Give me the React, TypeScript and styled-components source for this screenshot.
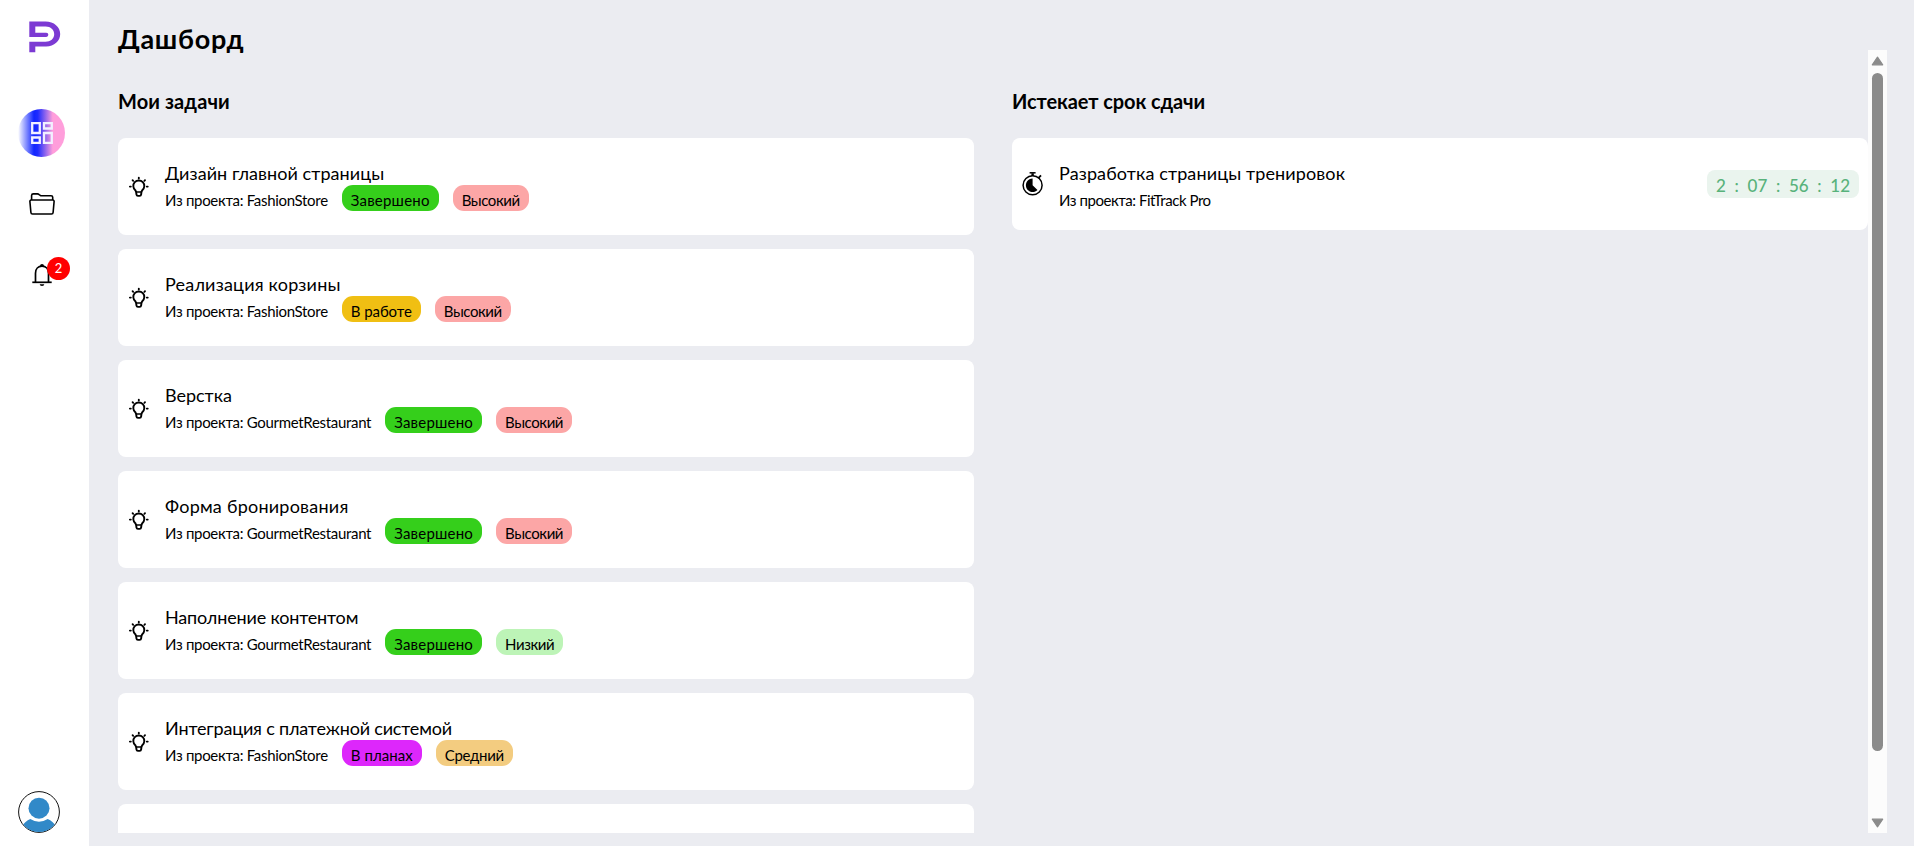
import React from 'react';
import styled, { createGlobalStyle } from 'styled-components';

const GlobalStyle = createGlobalStyle`
  *, *::before, *::after { box-sizing: border-box; }
  body {
    margin: 0;
    background: #ebecf1;
    color: #000;
    font-family: Lato, "Noto Sans", sans-serif;
  }
  h1, h2, h3, p { margin: 0; }
`;

const Page = styled.div`
  display: flex;
  height: 846px;
  overflow: hidden;
`;

const Sidebar = styled.aside`
  display: flex;
  flex-direction: column;
  flex: none;
  width: 89px;
  padding: 21px 0 13px 18px;
  background: #fff;
`;

const LogoMark = styled.svg`
  display: block;
  width: 32px;
  height: 32px;
  margin-left: 11px;
`;

const Nav = styled.nav`
  display: flex;
  flex-direction: column;
  gap: 23px;
  width: 48px;
  margin-top: 56px;
`;

const NavItem = styled.a<{ $active?: boolean }>`
  position: relative;
  display: flex;
  align-items: center;
  justify-content: center;
  width: 47px;
  height: 48px;
  border-radius: 50%;
  background: ${({ $active }) =>
    $active ? 'linear-gradient(90deg, #fff 0%, #1226ff 34%, #1f2cff 42%, #ff9edb 74%)' : 'none'};

  svg { display: block; }
`;

const Counter = styled.span`
  position: absolute;
  top: 6px;
  left: 29px;
  width: 23px;
  height: 23px;
  border-radius: 50%;
  background: #f00;
  color: #fff;
  font-size: 13px;
  line-height: 22px;
  text-align: center;
`;

const Avatar = styled.svg`
  display: block;
  width: 42px;
  height: 42px;
  margin-top: auto;
`;

const Main = styled.main`
  display: flex;
  flex: 1;
  flex-direction: column;
  padding: 0 27px 13px 29px;
`;

const Heading = styled.h1`
  flex: none;
  height: 50px;
  padding-top: 26px;
  font-size: 27px;
  font-weight: 700;
  line-height: 25px;
  letter-spacing: 0.7px;
`;

const ScrollArea = styled.div`
  display: flex;
  flex: 1;
  min-height: 0;
`;

const Columns = styled.div`
  display: grid;
  flex: 1;
  grid-template-columns: 1fr 1fr;
  gap: 38px;
  overflow: hidden;
`;

const Column = styled.section`
  padding-top: 39px;
`;

const ColumnTitle = styled.h2<{ $track: number }>`
  margin-bottom: 25px;
  font-size: 20px;
  font-weight: 700;
  line-height: 24px;
  letter-spacing: ${({ $track }) => $track}px;
`;

const List = styled.div`
  display: flex;
  flex-direction: column;
  gap: 14px;
`;

const Card = styled.article<{ $compact?: boolean }>`
  display: flex;
  align-items: center;
  height: ${({ $compact }) => ($compact ? 92 : 97)}px;
  padding: 0 9px 0 10px;
  border-radius: 8px;
  background: #fff;
`;

const CardIcon = styled.svg`
  flex: none;
  width: 22px;
  height: 24px;
  margin-right: 15px;
`;

const CardBody = styled.div`
  flex: 1;
  align-self: flex-start;
  padding-top: 23px;
`;

const CardTitle = styled.h3<{ $track: number }>`
  font-size: 18px;
  font-weight: 400;
  line-height: 24px;
  letter-spacing: ${({ $track }) => $track}px;
`;

const Meta = styled.div`
  display: flex;
  gap: 14px;
  font-size: 15px;
  line-height: 22px;
`;

const Project = styled.p<{ $track?: number }>`
  padding-top: 4px;
  letter-spacing: ${({ $track = -0.31 }) => $track}px;
`;

const Badge = styled.span<{ $color: string; $track: number }>`
  height: 26px;
  padding: 4px 9px 0;
  border-radius: 11px;
  background: ${({ $color }) => $color};
  letter-spacing: ${({ $track }) => $track}px;
`;

const Timer = styled.div`
  display: flex;
  align-items: center;
  justify-content: space-between;
  width: 152px;
  height: 28px;
  padding: 4px 9px 0;
  border-radius: 8px;
  background: #eaf4ee;
  color: #58b27b;
  font-size: 17px;
  font-weight: 500;
  line-height: 24px;
`;

const Scrollbar = styled.div`
  display: flex;
  flex: none;
  flex-direction: column;
  align-items: center;
  justify-content: space-between;
  width: 19px;
  padding: 6px 0 5px;
  background: #fcfcfc;
`;

const Thumb = styled.div`
  width: 11px;
  height: 678px;
  margin-top: 7px;
  margin-bottom: auto;
  border-radius: 6px;
  background: #8b8b8b;
`;

type BadgeInfo = { label: string; color: string; track: number };

const STATUS: Record<'done' | 'work' | 'plan', BadgeInfo> = {
  done: { label: 'Завершено', color: '#35cf1b', track: 0.22 },
  work: { label: 'В работе', color: '#f0bf13', track: -0.07 },
  plan: { label: 'В планах', color: '#dd27fb', track: 0.05 },
};

const PRIORITY: Record<'high' | 'mid' | 'low', BadgeInfo> = {
  high: { label: 'Высокий', color: '#fca6a6', track: -0.42 },
  mid: { label: 'Средний', color: '#f3cc80', track: -0.3 },
  low: { label: 'Низкий', color: '#bdf4b7', track: -0.45 },
};

type Task = {
  title: string;
  track: number;
  project: string;
  status: keyof typeof STATUS;
  priority: keyof typeof PRIORITY;
};

const TASKS: Task[] = [
  { title: 'Дизайн главной страницы', track: 0.07, project: 'FashionStore', status: 'done', priority: 'high' },
  { title: 'Реализация корзины', track: 0.2, project: 'FashionStore', status: 'work', priority: 'high' },
  { title: 'Верстка', track: -0.02, project: 'GourmetRestaurant', status: 'done', priority: 'high' },
  { title: 'Форма бронирования', track: 0.23, project: 'GourmetRestaurant', status: 'done', priority: 'high' },
  { title: 'Наполнение контентом', track: -0.17, project: 'GourmetRestaurant', status: 'done', priority: 'low' },
  { title: 'Интеграция с платежной системой', track: -0.18, project: 'FashionStore', status: 'plan', priority: 'mid' },
  { title: 'Разработка страницы тренировок', track: 0.12, project: 'FitTrack Pro', status: 'work', priority: 'mid' },
];

const Bulb = () => (
  <CardIcon viewBox="0 0 22 24" fill="none" stroke="#000" strokeWidth="1.9" strokeLinecap="round">
    <path d="M8.100 16.900L7.300 15.200a5.500 5.500 0 1 1 7 0L13.500 16.900L13.100 19.700a1.400 1.400 0 0 1-1.400 1.200H9.900a1.400 1.400 0 0 1-1.400-1.200z" />
    <path d="M8.400 16.900h4.800" strokeWidth="1.500" />
    <path d="M10.800 2.700v.8M4.600 5.200l.6.6M17 5.200l-.6.600M1.900 11.600h.900M18.800 11.600h.900" />
  </CardIcon>
);

const Stopwatch = () => (
  <CardIcon viewBox="0 0 22 24" fill="none" stroke="#000">
    <circle cx="10.600" cy="13.300" r="9.500" strokeWidth="1.500" />
    <path d="M10.600 4V1.200" strokeWidth="2.400" />
    <path d="M7.600 .8h6" strokeWidth="1.500" />
    <path d="M16.300 6.200l2.700-2.900" strokeWidth="1.800" />
    <path d="M10.600 6.500a6.800 6.800 0 1 0 4.900 11.600L10.600 13.300z" fill="#000" stroke="none" />
  </CardIcon>
);

const TaskCard = ({ task }: { task: Task }) => {
  const badges = [STATUS[task.status], PRIORITY[task.priority]];
  return (
    <Card>
      <Bulb />
      <CardBody>
        <CardTitle $track={task.track}>{task.title}</CardTitle>
        <Meta>
          <Project>Из проекта: {task.project}</Project>
          {badges.map((b) => (
            <Badge key={b.label} $color={b.color} $track={b.track}>{b.label}</Badge>
          ))}
        </Meta>
      </CardBody>
    </Card>
  );
};

const TIME_PARTS = ['2', ':', '07', ':', '56', ':', '12'];

export default function App() {
  return (
    <>
      <GlobalStyle />
      <Page>
        <Sidebar>
          <LogoMark viewBox="0 0 32 32" fill="#7c3ad3">
            <path d="M.3.5h16.200C25 .5 31.200 6 31.200 13s-6 12.400-14 12.400H6.300v5.800h-6V20.700H16.500c5 0 8.700-3.100 8.700-7.500S21.600 5.600 16.700 5.600H6.300v6.100H17.200a2.150 2.150 0 0 1 0 4.300H.3z" />
          </LogoMark>
          <Nav>
            <NavItem $active>
              <svg width="22" height="22" viewBox="0 0 22 22" fill="none" stroke="#f2f0ff" strokeWidth="2.300">
                <path d="M1.200 1.200h7.600v9.800H1.200zM1.200 15.500h7.600v5.300H1.200zM13 1.200h7.800v5.300H13zM13 11h7.800v9.800H13z" />
              </svg>
            </NavItem>
            <NavItem>
              <svg width="26" height="22" viewBox="0 0 26 22" fill="none" stroke="#000" strokeWidth="1.600" strokeLinejoin="round">
                <path d="M2.600 7V2.500A1.700 1.700 0 0 1 4.300.9h4.200c.7 0 1.200.3 1.700.7l1 .7c.4.300.800.400 1.300.400h9.600a1.600 1.600 0 0 1 1.600 1.600V7" />
                <path d="M2.200 7h21.600a1.300 1.300 0 0 1 1.300 1.500l-1 11a1.600 1.600 0 0 1-1.600 1.500H3.500a1.600 1.600 0 0 1-1.600-1.500l-1-11A1.300 1.300 0 0 1 2.200 7z" />
              </svg>
            </NavItem>
            <NavItem>
              <svg width="20" height="24" viewBox="0 0 20 24" fill="none" stroke="#000" strokeWidth="1.700">
                <path d="M3.500 19.200v-9C3.500 6 6.200 3.200 10 3.200s6.500 2.800 6.500 7v9" />
                <path d="M.3 19.300h19.400" />
                <path d="M8 3a2 2 0 0 1 4 0zM7.700 21.300h4.600a2.300 1.700 0 0 1-4.600 0z" fill="#000" stroke="none" />
              </svg>
              <Counter>2</Counter>
            </NavItem>
          </Nav>
          <Avatar viewBox="0 0 42 42">
            <clipPath id="avatar-clip"><circle cx="21" cy="21" r="20" /></clipPath>
            <circle cx="21" cy="21" r="20.400" fill="#fff" stroke="#111" />
            <g clipPath="url(#avatar-clip)" fill="#3189c8">
              <circle cx="21" cy="17.200" r="10.500" />
              <path d="M4 35.500Q7 30 12.300 28Q21 33.500 29.700 28Q35 30 38 35.500V42H4z" />
            </g>
          </Avatar>
        </Sidebar>
        <Main>
          <Heading>Дашборд</Heading>
          <ScrollArea>
            <Columns>
              <Column>
                <ColumnTitle $track={0.1}>Мои задачи</ColumnTitle>
                <List>
                  {TASKS.map((task) => <TaskCard key={task.title} task={task} />)}
                </List>
              </Column>
              <Column>
                <ColumnTitle $track={-0.1}>Истекает срок сдачи</ColumnTitle>
                <List>
                  <Card $compact>
                    <Stopwatch />
                    <CardBody>
                      <CardTitle $track={0.12}>Разработка страницы тренировок</CardTitle>
                      <Meta><Project $track={-0.46}>Из проекта: FitTrack Pro</Project></Meta>
                    </CardBody>
                    <Timer>
                      {TIME_PARTS.map((part, i) => <span key={i}>{part}</span>)}
                    </Timer>
                  </Card>
                </List>
              </Column>
            </Columns>
            <Scrollbar>
              <svg width="13" height="10" viewBox="0 0 13 10">
                <path d="M6.500 1.200L11.700 8.800H1.300z" fill="#8b8b8b" stroke="#8b8b8b" strokeWidth="1.200" strokeLinejoin="round" />
              </svg>
              <Thumb />
              <svg width="13" height="10" viewBox="0 0 13 10">
                <path d="M6.500 8.800L11.700 1.200H1.300z" fill="#8b8b8b" stroke="#8b8b8b" strokeWidth="1.200" strokeLinejoin="round" />
              </svg>
            </Scrollbar>
          </ScrollArea>
        </Main>
      </Page>
    </>
  );
}
